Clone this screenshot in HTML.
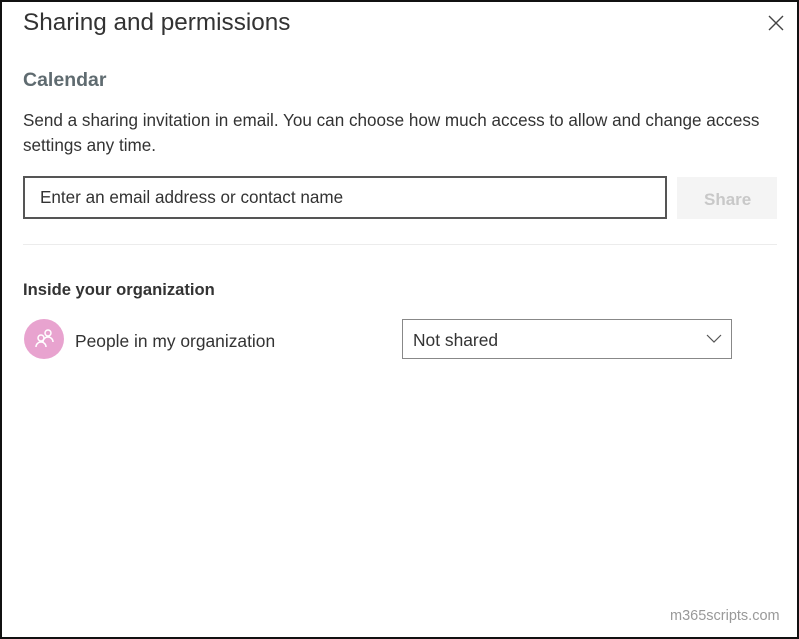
<!DOCTYPE html>
<html><head><style>
html,body{margin:0;padding:0;}
body{width:799px;height:639px;position:relative;overflow:hidden;background:#fff;font-family:"Liberation Sans",sans-serif;}
.frame{position:absolute;left:0;top:0;width:795px;height:635px;border:2px solid #111;}
.t{position:absolute;white-space:nowrap;}
</style></head><body>
<div class="frame"></div>
<div class="t" style="left:23px;top:9px;font-size:24.3px;color:#333;font-weight:300;">Sharing and permissions</div>
<svg style="position:absolute;left:768px;top:15px" width="16" height="16"><path d="M1 1L15 15M15 1L1 15" stroke="#444" stroke-width="1.4"/></svg>
<div class="t" style="left:23px;top:69px;font-size:19.5px;font-weight:bold;color:#5f6b70;">Calendar</div>
<div class="t" style="left:23px;top:111px;font-size:17.1px;color:#333;">Send a sharing invitation in email. You can choose how much access to allow and change access</div>
<div class="t" style="left:23px;top:136px;font-size:17.1px;color:#333;">settings any time.</div>
<div style="position:absolute;left:23px;top:176px;width:640px;height:39px;border:2px solid #555;"></div>
<div class="t" style="left:40px;top:188px;font-size:17.1px;color:#333;">Enter an email address or contact name</div>
<div style="position:absolute;left:677px;top:177px;width:100px;height:42px;background:#f4f4f4;"></div>
<div class="t" style="left:704px;top:190px;font-size:17px;font-weight:bold;color:#c8c8c8;">Share</div>
<div style="position:absolute;left:23px;top:244px;width:754px;height:1px;background:#ececec;"></div>
<div class="t" style="left:23px;top:280px;font-size:16.6px;font-weight:bold;color:#333;">Inside your organization</div>
<div style="position:absolute;left:24px;top:319px;width:40px;height:40px;border-radius:50%;background:#e8a3cf;"></div>
<svg style="position:absolute;left:34px;top:328px" width="22" height="22" fill="none" stroke="#fff" stroke-width="1.5"><circle cx="14" cy="5" r="3"/><path d="M9 14a5 5 0 0 1 10 0"/><circle cx="7" cy="10" r="3"/><path d="M2 19a5 5 0 0 1 10 0"/></svg>
<div class="t" style="left:75px;top:331px;font-size:17.4px;color:#333;">People in my organization</div>
<div style="position:absolute;left:402px;top:319px;width:328px;height:38px;border:1px solid #888;"></div>
<div class="t" style="left:413px;top:330px;font-size:17.4px;color:#333;">Not shared</div>
<svg style="position:absolute;left:706px;top:334px" width="16" height="10"><path d="M1 1L8 8L15 1" stroke="#555" stroke-width="1.2" fill="none"/></svg>
<div class="t" style="left:670px;top:608px;font-size:14.5px;color:#999;">m365scripts.com</div>
</body></html>
